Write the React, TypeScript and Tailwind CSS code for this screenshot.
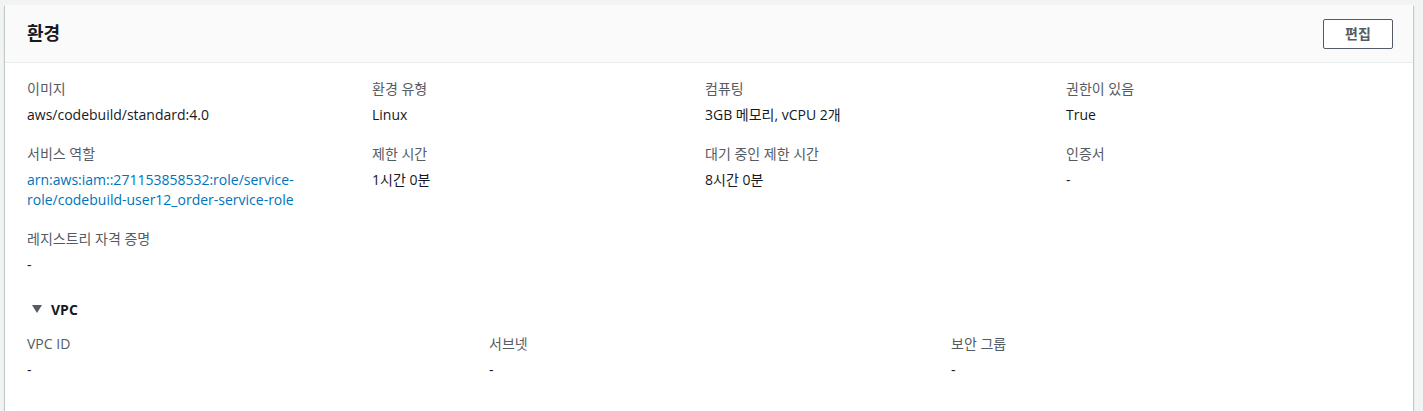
import React from 'react';

interface Field {
  label: string;
  value: React.ReactNode;
  link?: boolean;
}

const font = { fontFamily: '"Open Sans", "Noto Sans CJK KR", sans-serif' };

const FieldItem: React.FC<Field> = ({ label, value, link }) => (
  <div className="flex flex-col">
    <div className="text-[14px] leading-[20px] text-[#545b64] mb-[6px]">{label}</div>
    <div className={`text-[14px] leading-[20px] ${link ? 'text-[#0073bb]' : 'text-[#16191f]'}`}>{value}</div>
  </div>
);

const App: React.FC = () => {
  return (
    <div className="w-[1423px] h-[411px] overflow-hidden bg-[#f2f3f3] pt-[5px] pl-[5px]" style={font}>
      <div className="w-[1408px] h-[420px] bg-white shadow-[0_1px_1px_0_rgba(0,28,36,0.3),1px_1px_1px_0_rgba(0,28,36,0.15),-1px_1px_1px_0_rgba(0,28,36,0.15)]">
        <div className="h-[58px] bg-[#fafafa] border-b border-[#eaeded] flex items-center justify-between pl-[22px] pr-[20px]">
          <h2 className="text-[18px] font-bold text-[#16191f] leading-[22px] -mt-[1px]">환경</h2>
          <button className="h-[30px] w-[70px] border border-[#545b64] rounded-[2px] bg-white text-[14px] font-bold text-[#545b64]">
            편집
          </button>
        </div>

        <div className="pl-[22px] pr-[20px] pt-[16px]">
          <div className="grid grid-cols-[345px_333px_361px_1fr] gap-y-[19px]">
            <FieldItem label="이미지" value="aws/codebuild/standard:4.0" />
            <FieldItem label="환경 유형" value="Linux" />
            <FieldItem label="컴퓨팅" value="3GB 메모리, vCPU 2개" />
            <FieldItem label="권한이 있음" value="True" />

            <div className="pr-[40px]">
              <FieldItem
                label="서비스 역할"
                link
                value={
                  <>
                    arn:aws:iam::271153858532:role/service-
                    <br />
                    role/codebuild-user12_order-service-role
                  </>
                }
              />
            </div>
            <FieldItem label="제한 시간" value="1시간 0분" />
            <FieldItem label="대기 중인 제한 시간" value="8시간 0분" />
            <FieldItem label="인증서" value="-" />

            <FieldItem label="레지스트리 자격 증명" value="-" />
          </div>

          <div className="mt-[24px] flex items-center h-[20px]">
            <svg width="10" height="8" viewBox="0 0 10 8" className="ml-[5px] mr-[9px]">
              <polygon points="0,0 10,0 5,8" fill="#545b64" />
            </svg>
            <span className="text-[14px] font-bold text-[#16191f]">VPC</span>
          </div>

          <div className="mt-[15px] grid grid-cols-[462px_462px_1fr]">
            <FieldItem label="VPC ID" value="-" />
            <FieldItem label="서브넷" value="-" />
            <FieldItem label="보안 그룹" value="-" />
          </div>
        </div>
      </div>
    </div>
  );
};

export default App;
